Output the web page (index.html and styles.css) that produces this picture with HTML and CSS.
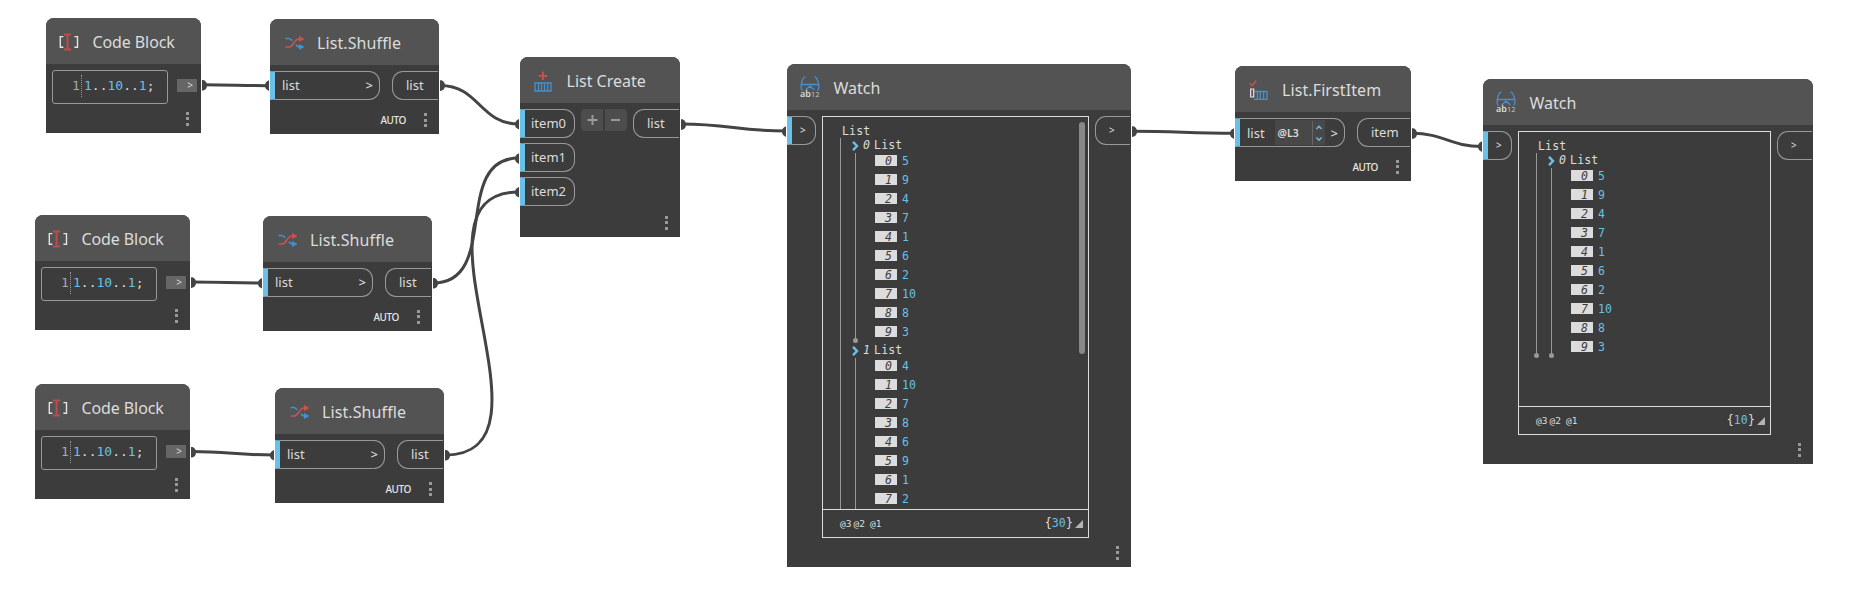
FILE: index.html
```html
<!DOCTYPE html>
<html lang="en">
<head>
<meta charset="utf-8">
<title>Graph</title>
<link rel="stylesheet" href="styles.css">
</head>
<body>
<svg class="defs" width="0" height="0">
  <symbol id="i-code" viewBox="0 0 20 18">
    <g fill="none" stroke="#e4e4e4" stroke-width="1.400"><path d="M4.400 3.600H1.300v10.600h3.100M15.400 3.600h3.100v10.600h-3.100"/></g>
    <path d="M5 1.500h7M5 16.500h7M8.500 1v15.400" stroke="#c04b48" stroke-width="2" fill="none"/>
  </symbol>
  <symbol id="i-shuffle" viewBox="0 0 20 16">
    <path d="M.5 3.500h3.300c1.600 0 2.400 1 3.400 2.300M11 9.800c1 1.500 1.800 2.200 3.500 2.200h1" stroke="#4590d0" stroke-width="1.700" fill="none"/>
    <path d="M.5 12h3.300C8.500 12 9.200 4 13.800 4h1.500" stroke="#c65450" stroke-width="1.700" fill="none"/>
    <path d="M14 1l5.500 3L14 7z" fill="#d0504b"/><path d="M14 9l5.500 3-5.500 3z" fill="#4590d0"/>
  </symbol>
  <symbol id="i-create" viewBox="0 0 18 21">
    <path d="M9 .5v8.500M4.700 4.800h8.600" stroke="#d0504b" stroke-width="1.800" fill="none"/>
    <path d="M1 12h16v8H1zM4.500 12v8M7.500 12v8M10.500 12v8M13.700 12v8" stroke="#4590d0" stroke-width="1.300" fill="none"/>
  </symbol>
  <symbol id="i-first" viewBox="0 0 19 20">
    <path d="M.6 3.200l2.600 2.400L7.200.8" stroke="#c65450" stroke-width="1.400" fill="none"/>
    <path d="M5.500 11.500H18v7.800H5M8.400 11.500v7.500M11.300 11.500v7.500M14.600 11.500v7.500" stroke="#4590d0" stroke-width="1.300" fill="none"/>
    <path d="M1.700 9h3v8h-3z" stroke="#e8e8e8" stroke-width="1.200" fill="none"/>
  </symbol>
  <symbol id="i-watch" viewBox="0 0 20 22">
    <g fill="none" stroke="#4590d0" stroke-width="1.300"><path d="M5.500.8C2.500 1.200 2.300 4.500 1.200 8.500h17.600C17.700 4.500 17.500 1.200 14.500.8M1.200 8.500v3.700c0 1.300.5 1.900 1.500 2.300M18.800 8.500v3.700c0 1.300-.5 1.900-1.500 2.300M5.500 14L10 10.200 14.500 14"/></g>
  </symbol>
</svg>

<main class="canvas">
  <section class="node code n1">
    <header><svg class="ic-code"><use href="#i-code"/></svg><h2>Code Block</h2></header>
    <div class="body"><div class="editor"><i>1</i><code><b>1</b>..<b>10</b>..<b>1</b>;</code></div><span class="stub">&gt;</span></div>
    <span class="dots"></span>
  </section>
  <section class="node code n2">
    <header><svg class="ic-code"><use href="#i-code"/></svg><h2>Code Block</h2></header>
    <div class="body"><div class="editor"><i>1</i><code><b>1</b>..<b>10</b>..<b>1</b>;</code></div><span class="stub">&gt;</span></div>
    <span class="dots"></span>
  </section>
  <section class="node code n3">
    <header><svg class="ic-code"><use href="#i-code"/></svg><h2>Code Block</h2></header>
    <div class="body"><div class="editor"><i>1</i><code><b>1</b>..<b>10</b>..<b>1</b>;</code></div><span class="stub">&gt;</span></div>
    <span class="dots"></span>
  </section>

  <section class="node shuffle n4">
    <header><svg class="ic-shuffle"><use href="#i-shuffle"/></svg><h2>List.Shuffle</h2></header>
    <div class="body"><div class="in">list<em>&gt;</em></div><div class="out">list</div></div>
    <span class="auto">AUTO</span><span class="dots"></span>
  </section>
  <section class="node shuffle n5">
    <header><svg class="ic-shuffle"><use href="#i-shuffle"/></svg><h2>List.Shuffle</h2></header>
    <div class="body"><div class="in">list<em>&gt;</em></div><div class="out">list</div></div>
    <span class="auto">AUTO</span><span class="dots"></span>
  </section>
  <section class="node shuffle n6">
    <header><svg class="ic-shuffle"><use href="#i-shuffle"/></svg><h2>List.Shuffle</h2></header>
    <div class="body"><div class="in">list<em>&gt;</em></div><div class="out">list</div></div>
    <span class="auto">AUTO</span><span class="dots"></span>
  </section>

  <section class="node create">
    <header><svg class="ic-create"><use href="#i-create"/></svg><h2>List Create</h2></header>
    <div class="body">
      <div class="inputs"><div class="in">item0</div><div class="in">item1</div><div class="in">item2</div></div>
      <div class="btns">
        <svg width="22" height="22"><path d="M6.500 11h10M11.500 6v10" stroke="#9a9a9a" stroke-width="2"/></svg>
        <svg width="22" height="22"><path d="M6 11h9" stroke="#9a9a9a" stroke-width="2"/></svg>
      </div>
      <div class="out">list</div>
    </div>
    <span class="dots"></span>
  </section>

  <section class="node watch w1">
    <header><svg class="ic-watch"><use href="#i-watch"/><text class="ab" x="0" y="21.300">ab</text><text class="num" x="11" y="21.300">12</text></svg><h2>Watch</h2></header>
    <div class="body">
      <div class="in"><em>&gt;</em></div>
      <div class="panel">
        <div class="tree">
          <div class="root">List</div>
          <div class="level">
            <div class="head"><svg width="7" height="10"><path d="M1 .8l4 4.200-4 4.200" fill="none" stroke="#6ac0e7" stroke-width="2.400"/></svg><i>0</i>List</div>
            <ol class="end"><li><i>0</i>5</li><li><i>1</i>9</li><li><i>2</i>4</li><li><i>3</i>7</li><li><i>4</i>1</li><li><i>5</i>6</li><li><i>6</i>2</li><li><i>7</i>10</li><li><i>8</i>8</li><li><i>9</i>3</li></ol>
            <div class="head"><svg width="7" height="10"><path d="M1 .8l4 4.200-4 4.200" fill="none" stroke="#6ac0e7" stroke-width="2.400"/></svg><i>1</i>List</div>
            <ol><li><i>0</i>4</li><li><i>1</i>10</li><li><i>2</i>7</li><li><i>3</i>8</li><li><i>4</i>6</li><li><i>5</i>9</li><li><i>6</i>1</li><li><i>7</i>2</li></ol>
          </div>
          <span class="thumb"></span>
        </div>
        <footer><span class="lv">@3</span><span class="lv">@2</span><span class="lv">@1</span><span class="count">{<b>30</b>}</span><svg width="8" height="8"><path d="M8 0v8H0z" fill="#b4b4b4"/></svg></footer>
      </div>
      <div class="out"><em>&gt;</em></div>
    </div>
    <span class="dots"></span>
  </section>

  <section class="node first">
    <header><svg class="ic-first"><use href="#i-first"/></svg><h2>List.FirstItem</h2></header>
    <div class="body">
      <div class="in">list<span class="lace"><span>@L3</span><svg width="12" height="24"><path d="M3.500 8L6 5.200 8.500 8M3.500 16.500L6 19.300l2.500-2.800" fill="none" stroke="#6ac0e7" stroke-width="1.400"/></svg></span><em>&gt;</em></div>
      <div class="out">item</div>
    </div>
    <span class="auto">AUTO</span><span class="dots"></span>
  </section>

  <section class="node watch w2">
    <header><svg class="ic-watch"><use href="#i-watch"/><text class="ab" x="0" y="21.300">ab</text><text class="num" x="11" y="21.300">12</text></svg><h2>Watch</h2></header>
    <div class="body">
      <div class="in"><em>&gt;</em></div>
      <div class="panel">
        <div class="tree">
          <div class="root">List</div>
          <div class="level end">
            <div class="head"><svg width="7" height="10"><path d="M1 .8l4 4.200-4 4.200" fill="none" stroke="#6ac0e7" stroke-width="2.400"/></svg><i>0</i>List</div>
            <ol class="end"><li><i>0</i>5</li><li><i>1</i>9</li><li><i>2</i>4</li><li><i>3</i>7</li><li><i>4</i>1</li><li><i>5</i>6</li><li><i>6</i>2</li><li><i>7</i>10</li><li><i>8</i>8</li><li><i>9</i>3</li></ol>
          </div>
        </div>
        <footer><span class="lv">@3</span><span class="lv">@2</span><span class="lv">@1</span><span class="count">{<b>10</b>}</span><svg width="8" height="8"><path d="M8 0v8H0z" fill="#b4b4b4"/></svg></footer>
      </div>
      <div class="out"><em>&gt;</em></div>
    </div>
    <span class="dots"></span>
  </section>

  <svg class="wires" width="1858" height="614">
    <g fill="none" stroke="#444" stroke-width="3">
      <path d="M203 84.700C233 84.700 239 85.700 269 85.700"/>
      <path d="M191 282C223 282 230 283 262 283"/>
      <path d="M191 451.500C228 451.500 237 455 274 455"/>
      <path d="M440 85.500C479.500 85.500 479.500 124 519 124"/>
      <path d="M433 283C501 283 451 158 519 158"/>
      <path d="M445 455C568 455 396 192 519 192"/>
      <path d="M681 124C728 124 739 131 786 131"/>
      <path d="M1132 131.300C1178 131.300 1188 133.300 1234 133.300"/>
      <path d="M1412 133.300C1444 133.300 1450 146.500 1482 146.500"/>
    </g>
    <g fill="#444">
      <path d="M202 80c3 0 5 2 5 5.300s-2 5.300-5 5.300zM191 277.300c3 0 5 2 5 5.300s-2 5.300-5 5.300zM191 447c3 0 5 2 5 5.300s-2 5.300-5 5.300zM440 80.300c3 0 5 2 5 5.300s-2 5.300-5 5.300zM433 278c3 0 5 2 5 5.300s-2 5.300-5 5.300zM445 450c3 0 5 2 5 5.300s-2 5.300-5 5.300zM681 119.300c3 0 5 2 5 5.300s-2 5.300-5 5.300zM1132 126.300c3 0 5 2 5 5.300s-2 5.300-5 5.300zM1412 128.300c3 0 5 2 5 5.300s-2 5.300-5 5.300z"/>
      <path d="M269 80.300c-3 1-4 3-4 5.300s1 4.300 4 5.300zM262 278c-3 1-4 3-4 5.300s1 4.300 4 5.300zM274 450c-3 1-4 3-4 5.300s1 4.300 4 5.300zM519 119c-3 1-4 3-4 5.300s1 4.300 4 5.300zM519 153.300c-3 1-4 3-4 5.300s1 4.300 4 5.300zM519 187c-3 1-4 3-4 5.300s1 4.300 4 5.300zM786 126.300c-3 1-4 3-4 5.300s1 4.300 4 5.300zM1234 128.300c-3 1-4 3-4 5.300s1 4.300 4 5.300zM1482 141.300c-3 1-4 3-4 5.300s1 4.300 4 5.300z"/>
    </g>
  </svg>
</main>
</body>
</html>
```

FILE: styles.css
```css
* { box-sizing: border-box; }
body { margin: 0; background: #fff; overflow: hidden; }
.defs { position: absolute; }
.canvas { position: relative; width: 1858px; height: 614px; font-family: "Noto Sans", sans-serif; color: #dcdcdc; }
.wires { position: absolute; left: 0; top: 0; }
em, i, b { font-style: normal; font-weight: 400; }

/* Node frame */
.node { position: absolute; background: #3c3c3c; border-radius: 8px 8px 0 0; overflow: hidden; height: 115px; }
.node header { height: 46px; background: #535353; display: flex; align-items: center; }
.node h2 { margin: 0; font-size: 16px; line-height: 24px; font-weight: 400; white-space: nowrap; padding-top: 2px; }
.body { display: flex; align-items: flex-start; padding-top: 6px; }
.dots { position: absolute; right: 12px; bottom: 7px; width: 3px; height: 14px; background: repeating-linear-gradient(#999 0 3px, transparent 3px 5.5px); }
.auto { position: absolute; right: 33px; bottom: 8px; font-size: 10px; line-height: 12px; font-weight: 500; letter-spacing: -.4px; color: #e6e6e6; }

.code { width: 155px; }
.shuffle { width: 169px; }
.n1 { left: 46px; top: 18px; }
.n2 { left: 35px; top: 215px; }
.n3 { left: 35px; top: 384px; }
.n4 { left: 270px; top: 19px; }
.n5 { left: 263px; top: 216px; }
.n6 { left: 275px; top: 388px; }
.create { left: 520px; top: 57px; width: 160px; height: 180px; }
.w1 { left: 787px; top: 64px; width: 344px; height: 503px; }
.first { left: 1235px; top: 66px; width: 176px; }
.w2 { left: 1483px; top: 79px; width: 330px; height: 385px; }

/* Header icons */
.ic-code { width: 20px; height: 18px; margin: 2px 13.5px 0 13px; }
.ic-shuffle { width: 20px; height: 16px; margin: 1px 12px 0 15px; }
.ic-create { width: 18px; height: 21px; margin: 2px 14.500px 0 14px; }
.ic-first { width: 19px; height: 20px; margin: 2px 14px 0 14px; }
.ic-watch { width: 20px; height: 22px; margin: 0 13.500px 0 13px; }
.code h2 { letter-spacing: -.1px; }
.shuffle h2 { letter-spacing: .1px; }
.first h2 { letter-spacing: .1px; }
.ab { font-size: 9px; font-weight: 600; fill: #dcdcdc; }
.num { font-size: 7.500px; fill: #c4c4c4; }

/* Ports */
.in { height: 29px; border: 1px solid #999; border-left: 5px solid #6ac0e7; border-radius: 0 11px 11px 0; display: flex; align-items: center; justify-content: space-between; padding: 0 6px 1px 7px; font-size: 13px; }
.out { height: 29px; border: 1px solid #999; border-right: 0; border-radius: 11px 0 0 11px; margin: 0 1px 0 auto; display: flex; align-items: center; padding: 0 0 1px 13px; font-size: 13px; }
.in em { font-weight: 500; }
.shuffle .in { width: 110px; }
.shuffle .out { width: 46px; }
.inputs { display: grid; gap: 5px; }
.create .in { width: 55px; padding-left: 6px; }
.create .out { width: 46px; }
.btns { display: flex; gap: 2px; margin-left: 6px; }
.btns svg { background: #4d4d4d; border-radius: 4px 0 0 4px; }
.btns svg + svg { border-radius: 0 4px 4px 0; }
.first .in { width: 110px; padding-bottom: 0; }
.first .out { width: 53px; }
.lace { display: flex; align-items: center; width: 50px; height: 25px; margin-left: 4px; background: #484848; font-size: 10.500px; font-weight: 600; padding-left: 3px; }
.lace span { width: 34px; }
.lace svg { border-left: 1px solid #666; }

/* Code editor */
.editor { width: 116px; height: 34px; margin-left: 6px; border: 1px solid #999; border-radius: 3px; display: flex; align-items: center; padding: 0 0 3px 19px; font: 13px/18px "DejaVu Sans Mono", monospace; }
.editor i { width: 10px; height: 22px; line-height: 22px; border-right: 1px dotted #999; color: #aaa; }
.editor code { font: inherit; padding-left: 2px; }
.editor b { color: #6ac0e7; }
.stub { width: 20px; height: 13px; margin: 9px 0 0 9px; background: #666; font-size: 10px; line-height: 12px; text-align: right; padding-right: 4px; }

/* Watch */
.watch .in { width: 29px; padding-left: 8px; font-size: 10px; }
.watch .out { width: 35px; font-size: 10px; }
.panel { margin-left: 6px; border: 1px solid #dcdcdc; font: 11.500px/15px "DejaVu Sans Mono", monospace; letter-spacing: .15px; }
.w1 .panel { width: 267px; height: 422px; }
.w2 .panel { width: 253px; height: 304px; }
.tree { position: relative; height: calc(100% - 27px); padding: 6px 0 0 18px; overflow: hidden; border-bottom: 1px solid #dcdcdc; }
.root { height: 15px; line-height: 17px; padding-left: 1px; }
.level, .tree ol { position: relative; margin: 0 0 0 -1px; border-left: 1px solid #999; }
.level { padding-left: 15px; }
.level .head { position: relative; display: flex; align-items: center; height: 15px; line-height: 15px; margin-left: -4px; }
.head i { margin: 0 4px 0 4px; font-style: italic; }
.tree ol { list-style: none; padding: 0 0 0 19px; }
.tree li { height: 19px; display: flex; align-items: flex-start; color: #6ac0e7; line-height: 16px; }
.tree li i { width: 22px; height: 11px; margin: 2px 5px 0 0; background: #dcdcdc; color: #3c3c3c; font-style: italic; line-height: 12px; text-align: right; padding-right: 5px; }
.end::after { content: ""; position: absolute; left: -3px; bottom: 0; width: 5px; height: 5px; border-radius: 50%; background: #999; }
.thumb { position: absolute; right: 3px; top: 5px; width: 6px; height: 232px; border-radius: 3px; background: #888; }
.panel footer { height: 27px; display: flex; align-items: center; padding: 0 5px 0 17px; }
.lv { font-size: 9.500px; margin-right: 2px; letter-spacing: 0; }
.lv + .lv { margin-right: 5px; }
.count { margin-left: auto; padding-right: 2px; }
.panel b { color: #6ac0e7; }
```
